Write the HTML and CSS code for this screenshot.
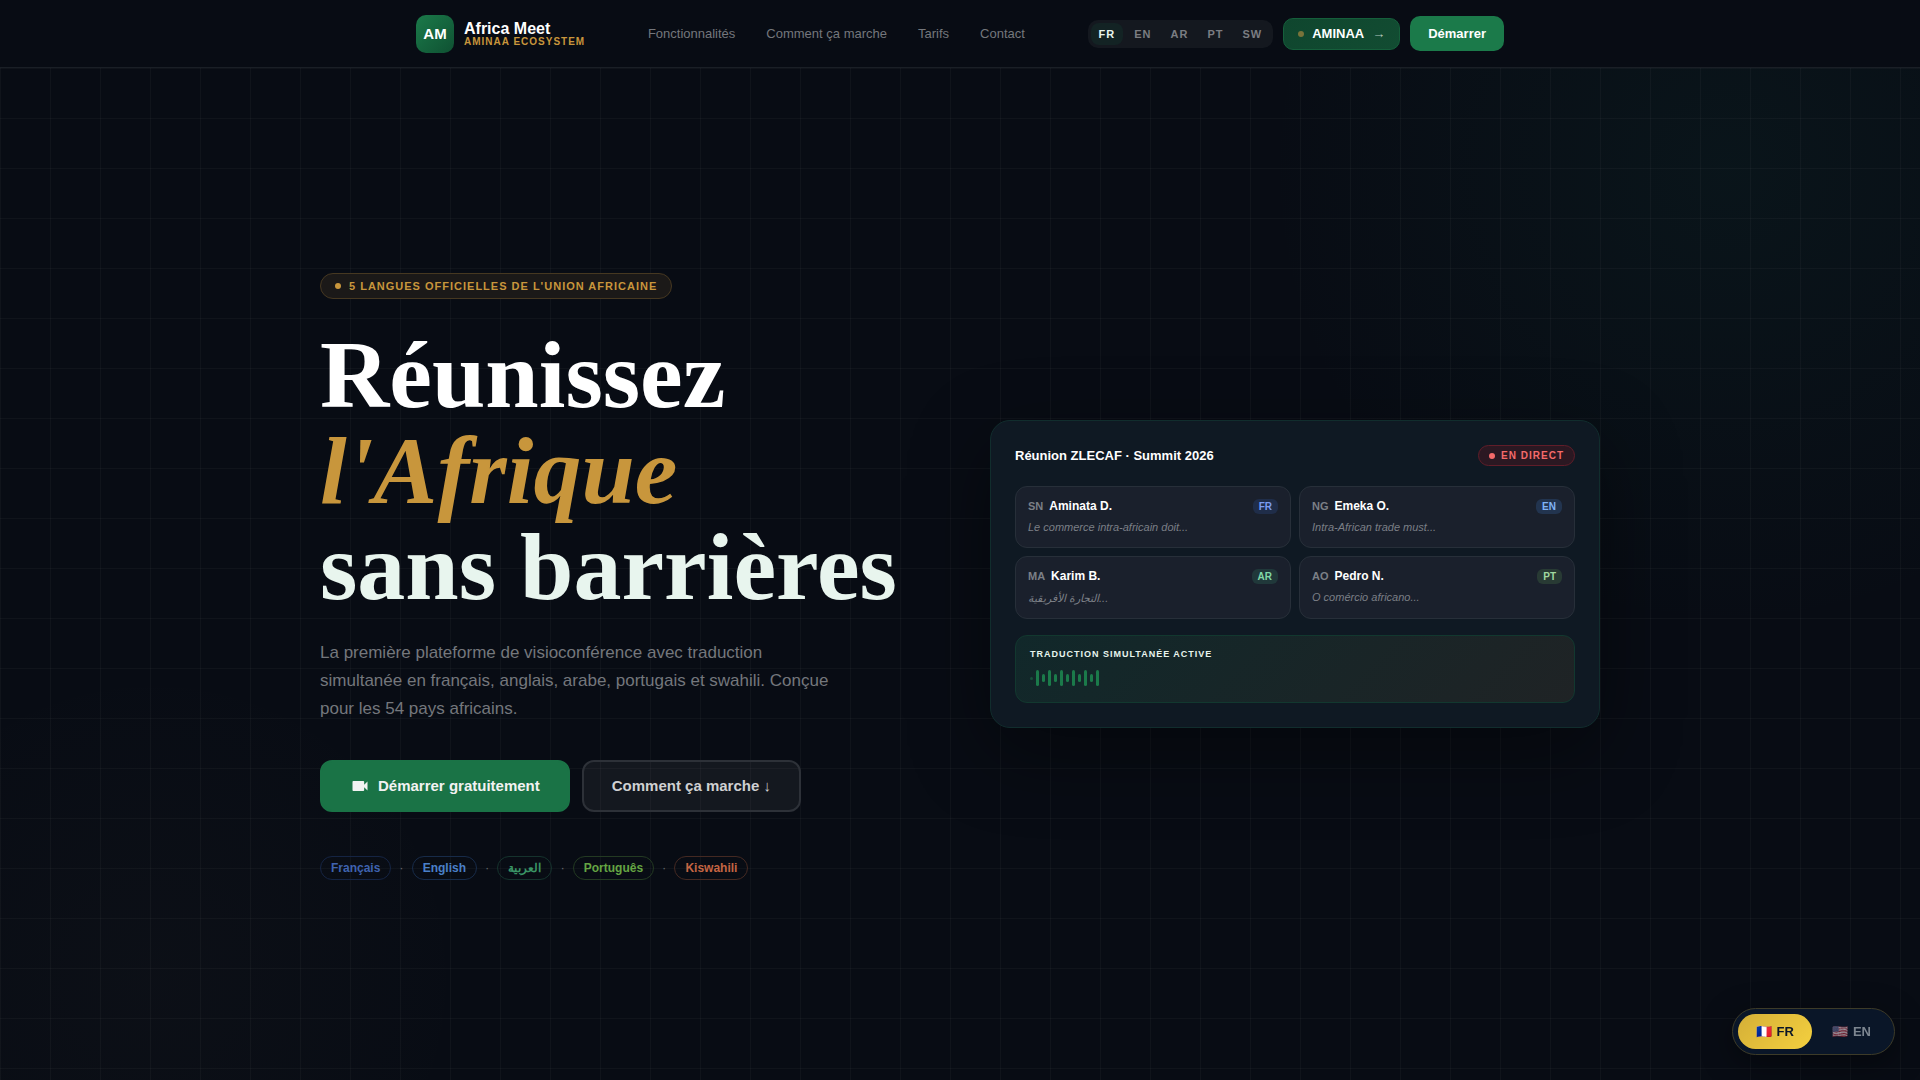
FILE: index.html
```html
<!DOCTYPE html>
<html lang="fr">
<head>
<meta charset="utf-8">
<meta name="viewport" content="width=device-width, initial-scale=1">
<title>Africa Meet</title>
<link rel="stylesheet" href="styles.css">
</head>
<body>
<header class="site-header">
  <div class="header-inner">
    <a class="brand" href="#">
      <span class="brand-mark">AM</span>
      <span class="brand-text">
        <span class="brand-name">Africa Meet</span>
        <span class="brand-sub">AMINAA ECOSYSTEM</span>
      </span>
    </a>
    <nav class="main-nav">
      <a href="#features">Fonctionnalités</a>
      <a href="#how">Comment ça marche</a>
      <a href="#pricing">Tarifs</a>
      <a href="#contact">Contact</a>
    </nav>
    <div class="header-actions">
      <div class="lang-switch">
        <button type="button" class="lang-option is-active">FR</button>
        <button type="button" class="lang-option">EN</button>
        <button type="button" class="lang-option">AR</button>
        <button type="button" class="lang-option">PT</button>
        <button type="button" class="lang-option">SW</button>
      </div>
      <a class="hub-link" href="#aminaa"><span class="hub-dot"></span><span>AMINAA</span><span class="hub-arrow">→</span></a>
      <a class="header-cta" href="#start">Démarrer</a>
    </div>
  </div>
</header>

<main class="hero">
  <div class="hero-inner">
    <section class="hero-copy">
      <div class="eyebrow"><span class="eyebrow-dot"></span>5 LANGUES OFFICIELLES DE L'UNION AFRICAINE</div>
      <h1 class="hero-title">
        <span class="title-line">Réunissez</span>
        <em class="title-line title-accent">l'Afrique</em>
        <span class="title-line title-soft">sans barrières</span>
      </h1>
      <p class="hero-lead">La première plateforme de visioconférence avec traduction simultanée en français, anglais, arabe, portugais et swahili. Conçue pour les 54 pays africains.</p>
      <div class="hero-buttons">
        <a class="btn btn-primary" href="#start">
          <svg class="btn-icon" viewBox="0 0 24 24" aria-hidden="true"><path fill="currentColor" d="M17 10.5V7c0-.55-.45-1-1-1H4c-.55 0-1 .45-1 1v10c0 .55.45 1 1 1h12c.55 0 1-.45 1-1v-3.500l4 4v-11l-4 4z"/></svg>
          Démarrer gratuitement
        </a>
        <a class="btn btn-secondary" href="#how">Comment ça marche ↓</a>
      </div>
      <div class="lang-chips">
        <span class="chip chip-fr">Français</span><span class="chip-sep">·</span>
        <span class="chip chip-en">English</span><span class="chip-sep">·</span>
        <span class="chip chip-ar" lang="ar">العربية</span><span class="chip-sep">·</span>
        <span class="chip chip-pt">Português</span><span class="chip-sep">·</span>
        <span class="chip chip-sw">Kiswahili</span>
      </div>
    </section>

    <section class="meeting">
      <div class="meeting-head">
        <h2 class="meeting-title">Réunion ZLECAF · Summit 2026</h2>
        <span class="live"><span class="live-dot"></span>EN DIRECT</span>
      </div>
      <div class="speakers">
        <article class="speaker">
          <div class="speaker-row"><span class="country">SN</span><span class="speaker-name">Aminata D.</span><span class="tag tag-fr">FR</span></div>
          <p class="speech">Le commerce intra-africain doit...</p>
        </article>
        <article class="speaker">
          <div class="speaker-row"><span class="country">NG</span><span class="speaker-name">Emeka O.</span><span class="tag tag-en">EN</span></div>
          <p class="speech">Intra-African trade must...</p>
        </article>
        <article class="speaker">
          <div class="speaker-row"><span class="country">MA</span><span class="speaker-name">Karim B.</span><span class="tag tag-ar">AR</span></div>
          <p class="speech" lang="ar">التجارة الأفريقية...</p>
        </article>
        <article class="speaker">
          <div class="speaker-row"><span class="country">AO</span><span class="speaker-name">Pedro N.</span><span class="tag tag-pt">PT</span></div>
          <p class="speech">O comércio africano...</p>
        </article>
      </div>
      <div class="translation">
        <div class="translation-title">TRADUCTION SIMULTANÉE ACTIVE</div>
        <div class="wave">
          <span class="bar bar-idle"></span><span class="bar bar-high"></span><span class="bar"></span><span class="bar bar-high"></span><span class="bar"></span><span class="bar bar-high"></span><span class="bar"></span><span class="bar bar-high"></span><span class="bar"></span><span class="bar bar-high"></span><span class="bar"></span><span class="bar bar-high"></span>
        </div>
      </div>
    </section>
  </div>
</main>

<div class="site-lang">
  <button type="button" class="site-lang-btn is-active"><span class="flag">🇫🇷</span>FR</button>
  <button type="button" class="site-lang-btn"><span class="flag">🇺🇸</span>EN</button>
</div>
</body>
</html>
```
FILE: styles.css
```css
* { box-sizing: border-box; }

body {
  margin: 0;
  background: #080c14;
  color: #fff;
  font-family: "Liberation Sans", Arial, sans-serif;
}

a { color: inherit; text-decoration: none; }
button { font: inherit; border: 0; cursor: pointer; }
h1, h2, p { margin: 0; }

/* Header */
.site-header {
  position: sticky;
  top: 0;
  z-index: 10;
  height: 68px;
  background: #080c14;
  border-bottom: 1px solid #1a1f26;
}

.header-inner {
  display: flex;
  align-items: center;
  justify-content: space-between;
  max-width: 1088px;
  height: 100%;
  margin: 0 auto;
}

.brand { display: flex; align-items: center; gap: 10px; }

.brand-mark {
  display: grid;
  place-items: center;
  width: 38px;
  height: 38px;
  border-radius: 10px;
  background: linear-gradient(135deg, #1b7a4a, #0f5132);
  font-size: 15px;
  font-weight: 700;
}

.brand-text { display: flex; flex-direction: column; }
.brand-name { font-size: 16px; line-height: 17px; font-weight: 700; }
.brand-sub { color: #c8963c; font-size: 10px; line-height: 10px; font-weight: 700; letter-spacing: 1px; }

.main-nav { display: flex; gap: 31px; color: #74777c; font-size: 13px; }

.header-actions { display: flex; align-items: center; gap: 10px; }

.lang-switch { display: flex; gap: 3px; padding: 3px; border-radius: 10px; background: #14181f; }

.lang-option {
  padding: 0 8px;
  border-radius: 8px;
  background: none;
  color: #7b7d82;
  font-size: 11px;
  line-height: 22px;
  font-weight: 700;
  letter-spacing: 1px;
}
.lang-option.is-active { background: #132324; color: #e8f5ee; }

.hub-link {
  display: flex;
  align-items: center;
  gap: 8px;
  padding: 0 14px;
  border: 1px solid #155f3b;
  border-radius: 10px;
  background: linear-gradient(135deg, #0f462e, #124c32);
  font-size: 13px;
  line-height: 30px;
  font-weight: 700;
}
.hub-dot { width: 6px; height: 6px; border-radius: 50%; background: #78733a; }
.hub-arrow { color: #b4c8be; }

.header-cta {
  padding: 0 18px;
  border-radius: 10px;
  background: #1b7a4a;
  font-size: 13px;
  line-height: 35px;
  font-weight: 700;
}

/* Hero */
.hero {
  display: grid;
  align-items: center;
  min-height: calc(100vh - 68px);
  background:
    linear-gradient(rgba(255, 255, 255, .03) 1px, transparent 1px) 0 0 / 50px 50px,
    linear-gradient(90deg, rgba(255, 255, 255, .03) 1px, transparent 1px) 0 0 / 50px 50px,
    radial-gradient(circle 460px at 90% 100px, rgba(27, 122, 100, .08), transparent),
    radial-gradient(circle 320px at 8% 90%, rgba(180, 160, 130, .025), transparent);
}

.hero-inner {
  display: grid;
  grid-template-columns: 1fr 1fr;
  align-items: center;
  gap: 60px;
  width: 100%;
  max-width: 1280px;
  margin: 0 auto;
}

.hero-copy { padding-top: 4px; }

.eyebrow {
  display: flex;
  align-items: center;
  gap: 8px;
  width: fit-content;
  margin-bottom: 28px;
  padding: 0 14px;
  border: 1px solid #463821;
  border-radius: 13px;
  background: #1b1918;
  color: #c8963c;
  font-size: 11px;
  line-height: 24px;
  font-weight: 700;
  letter-spacing: 1px;
}
.eyebrow-dot { width: 6px; height: 6px; border-radius: 50%; background: #c8963c; }

.hero-title {
  margin-bottom: 24px;
  font-family: "Liberation Serif", "Times New Roman", serif;
  font-size: 96px;
  line-height: 96px;
  font-weight: 700;
  white-space: nowrap;
}
.title-line { display: block; }
.title-accent { color: #c8963c; }
.title-soft { color: #e8f5ee; }

.hero-lead {
  max-width: 520px;
  margin-bottom: 37px;
  color: #74777c;
  font-size: 17px;
  line-height: 28px;
}

.hero-buttons { display: flex; gap: 12px; margin-bottom: 44px; }

.btn {
  display: flex;
  align-items: center;
  gap: 8px;
  height: 52px;
  padding: 0 28px;
  border: 2px solid transparent;
  border-radius: 12px;
  font-size: 15px;
  font-weight: 700;
}
.btn-primary { background: #1a7346; border-color: #1a7346; color: #f2f2f2; }
.btn-secondary { background: rgba(255, 255, 255, .05); border-color: #2d3138; color: #cfd0d2; }
.btn-icon { width: 20px; height: 20px; }

.lang-chips { display: flex; align-items: center; gap: 8px; font-size: 12px; }
.chip { padding: 0 10px; border: 1px solid; border-radius: 12px; line-height: 22px; font-weight: 700; }
.chip-sep { color: #63666b; font-size: 13px; }
.chip-fr { color: #3f63b0; border-color: #152443; }
.chip-en { color: #4a80c8; border-color: #172b49; }
.chip-ar { color: #3a9566; border-color: #15332d; }
.chip-pt { color: #65a543; border-color: #233a22; }
.chip-sw { color: #c46543; border-color: #442922; }

/* Meeting preview */
.meeting {
  padding: 24px;
  border: 1px solid #112d2d;
  border-radius: 20px;
  background: #0f1923;
  box-shadow: 0 24px 80px rgba(0, 0, 0, .4);
}

.meeting-head { display: flex; align-items: center; justify-content: space-between; margin-bottom: 20px; }
.meeting-title { font-size: 13px; font-weight: 700; }

.live {
  display: flex;
  align-items: center;
  gap: 6px;
  padding: 0 10px;
  border: 1px solid #611d29;
  border-radius: 11px;
  background: #2b1822;
  color: #f46a6a;
  font-size: 10px;
  line-height: 19px;
  font-weight: 700;
  letter-spacing: 1px;
}
.live-dot { width: 6px; height: 6px; border-radius: 50%; background: #f46a6a; }

.speakers { display: grid; grid-template-columns: 1fr 1fr; gap: 8px; margin-bottom: 16px; }
.speaker { padding: 12px; border: 1px solid #272f39; border-radius: 12px; background: #1a202c; }
.speaker-row { display: flex; align-items: center; gap: 6px; margin-bottom: 6px; font-size: 12px; line-height: 15px; font-weight: 700; }
.country { color: #7b7f86; font-size: 11px; }
.tag { margin-left: auto; padding: 0 6px; border-radius: 6px; font-size: 10px; }
.tag-fr { background: #1f2d49; color: #7b9cf0; }
.tag-en { background: #22344f; color: #80b4f8; }
.tag-ar { background: #20383a; color: #80d8a8; }
.tag-pt { background: #283a34; color: #a0d8a0; }
.speech { color: #7b7f86; font-size: 11px; line-height: 15px; font-style: italic; }
.speech:lang(ar) { line-height: 16px; }

.translation {
  padding: 12px 14px 14px;
  border: 1px solid #12382f;
  border-radius: 12px;
  background: linear-gradient(135deg, #11282a, #1f2325);
}
.translation-title { margin-bottom: 8px; color: #e8f5ee; font-size: 9px; line-height: 12px; font-weight: 700; letter-spacing: 1px; }
.wave { display: flex; align-items: center; gap: 3px; height: 20px; }
.bar { width: 3px; height: 8px; border-radius: 2px; background: #1b7a4a; }
.bar-high { height: 16px; }
.bar-idle { height: 3px; opacity: .5; }

/* Floating language toggle */
.site-lang {
  position: fixed;
  right: 25px;
  bottom: 25px;
  z-index: 20;
  display: flex;
  gap: 2px;
  padding: 5px;
  border: 1px solid #3d3b28;
  border-radius: 24px;
  background: #0a1628;
  box-shadow: 0 8px 32px rgba(0, 0, 0, .4);
}
.site-lang-btn {
  display: flex;
  gap: 5px;
  padding: 0 18px;
  border-radius: 18px;
  background: none;
  color: #7c858f;
  font-size: 13px;
  line-height: 35px;
  font-weight: 700;
}
.flag { opacity: .6; }
.site-lang-btn.is-active { background: linear-gradient(135deg, #d4af37, #f4d03f); color: #0a1628; }
.is-active .flag { opacity: 1; }
```
